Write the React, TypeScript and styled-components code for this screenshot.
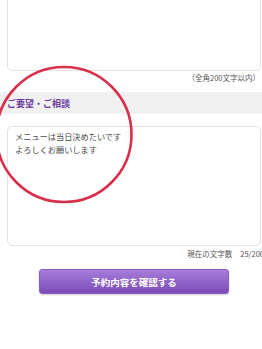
import React from "react";
import styled, { createGlobalStyle } from "styled-components";

const Global = createGlobalStyle`
  html, body { margin: 0; padding: 0; background: #fff; }
  body { font-family: "Noto Sans CJK JP", "Noto Sans", sans-serif; }
`;

const Page = styled.div`
  position: relative;
  width: 262px;
  height: 349px;
  overflow: hidden;
  background: #fff;
`;

const Box = styled.div<{ $h: number; $cut?: boolean }>`
  box-sizing: border-box;
  margin-left: 7px;
  width: 254px;
  height: ${(p) => p.$h}px;
  border: 1px solid #e2e2e2;
  border-top: ${(p) => (p.$cut ? "none" : "1px solid #e2e2e2")};
  border-radius: ${(p) => (p.$cut ? "0 0 5px 5px" : "5px")};
  background: #fff;
  padding: 3px 7px;
  font-size: 8.2px;
  line-height: 12.5px;
  color: #4a4a4a;
`;

const Note = styled.div<{ $top: number; $right: number }>`
  display: flex;
  justify-content: flex-end;
  margin-top: ${(p) => p.$top}px;
  margin-right: ${(p) => p.$right}px;
  font-size: 7.5px;
  line-height: 10px;
  color: #555;
  white-space: nowrap;
`;

const SectionBar = styled.div`
  margin-top: 9px;
  height: 22px;
  background: #f1f1f1;
  display: flex;
  align-items: center;
  padding-left: 7px;
  font-size: 9px;
  font-weight: 700;
  color: #6a3a9e;
  margin-bottom: 12px;
`;

const Counter = styled.span`
  display: inline-flex;
  gap: 8px;
`;

const ButtonRow = styled.div`
  display: flex;
  padding-left: 39px;
  margin-top: 10px;
`;

const Button = styled.button`
  width: 190px;
  height: 25px;
  border: 1px solid #8a5cc4;
  border-radius: 3px;
  background: linear-gradient(#a77cdb, #7c4cb6);
  box-shadow: 0 1px 2px rgba(0, 0, 0, 0.2);
  color: #fff;
  font-family: inherit;
  font-size: 9.5px;
  font-weight: 700;
  padding: 0;
`;

const Mark = styled.svg`
  position: absolute;
  left: 0;
  top: 0;
  pointer-events: none;
`;

export default function App() {
  return (
    <Page>
      <Global />
      <Box $h={71} $cut />
      <Note $top={2} $right={2}>（全角200文字以内）</Note>
      <SectionBar>ご要望・ご相談</SectionBar>
      <Box $h={120}>
        メニューは当日決めたいです
        <br />
        よろしくお願いします
      </Box>
      <Note $top={3} $right={-2}>
        <Counter>
          <span>現在の文字数</span>
          <span>25/200</span>
        </Counter>
      </Note>
      <ButtonRow>
        <Button>予約内容を確認する</Button>
      </ButtonRow>
      <Mark width="262" height="349" viewBox="0 0 262 349">
        <ellipse cx="64" cy="134.5" rx="67.5" ry="67.5" fill="none" stroke="#d8304b" strokeWidth="2.6" />
      </Mark>
    </Page>
  );
}
